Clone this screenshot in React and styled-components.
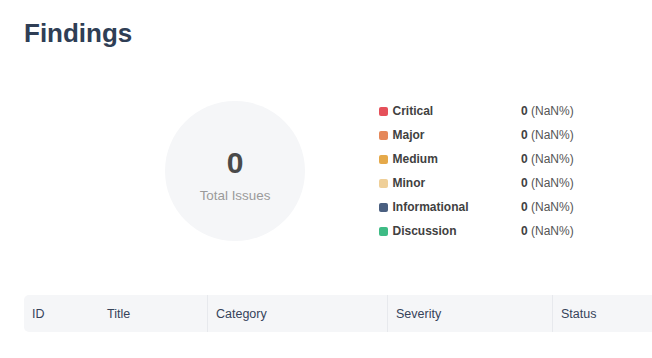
import React from "react";
import styled, { createGlobalStyle } from "styled-components";

const GlobalStyle = createGlobalStyle`
  html, body { margin: 0; padding: 0; background: #ffffff; overflow: hidden; }
  body { font-family: "Liberation Sans", Arial, sans-serif; }
`;

const Page = styled.div`
  padding: 17px 0 0 24px;
  width: 652px;
  box-sizing: border-box;
`;

const Heading = styled.h1`
  margin: 0;
  font-size: 26px;
  line-height: 32px;
  font-weight: 700;
  color: #2f3e55;
`;

const Summary = styled.section`
  display: flex;
  align-items: flex-start;
  margin-top: 52px;
  padding-left: 141px;
  gap: 74px;
`;

const Circle = styled.div`
  width: 140px;
  height: 140px;
  border-radius: 50%;
  background: #f5f6f8;
  display: flex;
  flex-direction: column;
  align-items: center;
  padding-top: 44px;
  box-sizing: border-box;
`;

const Total = styled.div`
  font-size: 30px;
  line-height: 36px;
  font-weight: 700;
  color: #4a4a4a;
`;

const TotalLabel = styled.div`
  margin-top: 6px;
  font-size: 13.4px;
  line-height: 18px;
  color: #9a9a9a;
`;

const Legend = styled.ul`
  list-style: none;
  margin: -2px 0 0;
  padding: 0;
  display: flex;
  flex-direction: column;
`;

const LegendRow = styled.li`
  display: grid;
  grid-template-columns: 142px auto;
  align-items: center;
  height: 24px;
  font-size: 12px;
`;

const LabelWrap = styled.span`
  display: flex;
  align-items: center;
  gap: 4.5px;
  font-weight: 700;
  color: #414141;
`;

const Swatch = styled.span`
  width: 9px;
  height: 9px;
  border-radius: 2px;
  background: ${(p) => p.$color};
`;

const Value = styled.span`
  color: #555;
  b { color: #414141; font-weight: 700; }
`;

const Table = styled.table`
  margin-top: 52px;
  width: 628px;
  border-collapse: separate;
  border-spacing: 0;
`;

const HeadCell = styled.th`
  background: #f5f6f8;
  height: 37px;
  padding: 0 8px;
  box-sizing: border-box;
  text-align: left;
  font-size: 12.5px;
  font-weight: 400;
  color: #36435a;
  width: ${(p) => p.$w}px;
  border-left: ${(p) => (p.$divider ? "1px solid #e7e9ed" : "none")};
  &:first-child { border-top-left-radius: 5px; border-bottom-left-radius: 5px; }
`;

const levels = [
  { name: "Critical", color: "#e5505a" },
  { name: "Major", color: "#e5885a" },
  { name: "Medium", color: "#e5a94a" },
  { name: "Minor", color: "#efcf98" },
  { name: "Informational", color: "#4a5f80" },
  { name: "Discussion", color: "#3ebb85" },
];

const columns = [
  { name: "ID", w: 75, divider: false },
  { name: "Title", w: 108, divider: false },
  { name: "Category", w: 180, divider: true },
  { name: "Severity", w: 165, divider: true },
  { name: "Status", w: 100, divider: true },
];

export default function App() {
  return (
    <>
      <GlobalStyle />
      <Page>
        <Heading>Findings</Heading>
        <Summary>
          <Circle>
            <Total>0</Total>
            <TotalLabel>Total Issues</TotalLabel>
          </Circle>
          <Legend>
            {levels.map((l) => (
              <LegendRow key={l.name}>
                <LabelWrap>
                  <Swatch $color={l.color} />
                  {l.name}
                </LabelWrap>
                <Value>
                  <b>0</b> (NaN%)
                </Value>
              </LegendRow>
            ))}
          </Legend>
        </Summary>
        <Table>
          <thead>
            <tr>
              {columns.map((c) => (
                <HeadCell key={c.name} $w={c.w} $divider={c.divider}>
                  {c.name}
                </HeadCell>
              ))}
            </tr>
          </thead>
        </Table>
      </Page>
    </>
  );
}
